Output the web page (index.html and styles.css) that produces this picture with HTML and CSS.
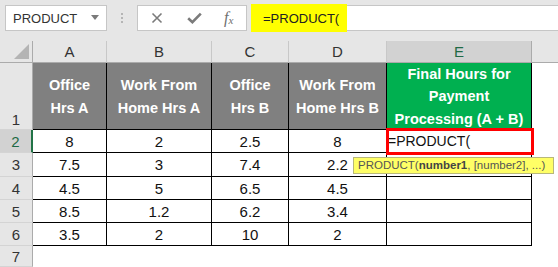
FILE: index.html
```html
<!DOCTYPE html>
<html>
<head>
<meta charset="utf-8">
<link rel="stylesheet" href="styles.css">
</head>
<body>
<div class="app">
  <div class="fbar">
    <div class="namebox">
      <span>PRODUCT</span>
      <svg class="caret" width="8" height="5" viewBox="0 0 8 5"><path d="M0 0H8L4 5Z" fill="#7a7a7a"/></svg>
    </div>
    <div class="dots"><i></i><i></i><i></i></div>
    <div class="btns">
      <svg class="bx" width="12" height="12" viewBox="0 0 12 12"><path d="M1.5 1.5L10.5 10.5M10.5 1.5L1.5 10.5" stroke="#7b7b7b" stroke-width="1.6" fill="none"/></svg>
      <svg class="bc" width="15" height="12" viewBox="0 0 15 12"><path d="M1.2 6.2L5.4 10.2L13.8 1.6" stroke="#7b7b7b" stroke-width="2.6" fill="none"/></svg>
      <span class="fx">f<sub>x</sub></span>
    </div>
    <div class="finput"><span class="hl">=PRODUCT(</span></div>
  </div>
  <div class="sheet">
    <div class="corner"><span class="tri"></span></div>
    <div class="ch">A</div>
    <div class="ch">B</div>
    <div class="ch">C</div>
    <div class="ch">D</div>
    <div class="ch sel">E</div>
    <div class="ch last"></div>

    <div class="rh r1">1</div>
    <div class="hd">Office<br>Hrs A</div>
    <div class="hd">Work From<br>Home Hrs A</div>
    <div class="hd">Office<br>Hrs B</div>
    <div class="hd">Work From<br>Home Hrs B</div>
    <div class="hd green">Final Hours for<br>Payment<br>Processing (A + B)</div>
    <div class="blank"></div>

    <div class="rh sel">2</div>
    <div class="c">8</div><div class="c">2</div><div class="c">2.5</div><div class="c">8</div><div class="c formula">=PRODUCT(</div><div class="blank"></div>

    <div class="rh">3</div>
    <div class="c">7.5</div><div class="c">3</div><div class="c">7.4</div><div class="c">2.2</div><div class="c"></div><div class="blank"></div>

    <div class="rh">4</div>
    <div class="c">4.5</div><div class="c">5</div><div class="c">6.5</div><div class="c">4.5</div><div class="c"></div><div class="blank"></div>

    <div class="rh">5</div>
    <div class="c">8.5</div><div class="c">1.2</div><div class="c">6.2</div><div class="c">3.4</div><div class="c"></div><div class="blank"></div>

    <div class="rh">6</div>
    <div class="c">3.5</div><div class="c">2</div><div class="c">10</div><div class="c">2</div><div class="c"></div><div class="blank"></div>

    <div class="rh">7</div>
    <div class="blank wide"></div>

    <div class="redbox"></div>
    <div class="tip">PRODUCT(<b>number1</b>, [number2], ...)</div>
  </div>
</div>
</body>
</html>
```
FILE: styles.css
```css
* { box-sizing: border-box; }
html, body { margin: 0; padding: 0; }
body {
  width: 558px;
  height: 267px;
  overflow: hidden;
  background: #ffffff;
  font-family: "Liberation Sans", Arial, sans-serif;
}
.app { width: 558px; height: 267px; display: flex; flex-direction: column; }

.fbar {
  height: 41px;
  background: #e6e6e6;
  display: flex;
  align-items: flex-start;
  padding-top: 5px;
}
.namebox {
  margin-left: 5px;
  width: 102px;
  height: 26px;
  background: #fff;
  border: 1px solid #c6c6c6;
  display: flex;
  align-items: center;
  justify-content: space-between;
  padding: 0 7px 0 7px;
  font-size: 13px;
  color: #333;
}
.caret { margin-top: -2px; }
.dots {
  width: 30px;
  height: 26px;
  display: flex;
  flex-direction: column;
  align-items: center;
  justify-content: center;
  gap: 2px;
}
.dots i { display: block; width: 2px; height: 2px; background: #b5b5b5; }
.btns {
  width: 110px;
  height: 26px;
  background: #fff;
  border: 1px solid #c6c6c6;
  display: flex;
  align-items: center;
  padding: 0 0 0 13px;
}
.bc { margin-left: 24px; }
.fx {
  margin-left: 22px;
  font-family: "Liberation Serif", "Times New Roman", serif;
  font-style: italic;
  font-size: 16px;
  color: #6f6f6f;
  line-height: 1;
}
.fx sub { font-size: 11px; vertical-align: -1px; }
.finput {
  margin-left: 4px;
  flex: 1;
  height: 26px;
  background: #fff;
  border-top: 1px solid #c6c6c6;
  border-bottom: 1px solid #c6c6c6;
  display: flex;
}
.hl {
  background: #ffff00;
  width: 96px;
  margin-top: -2px;
  height: 28px;
  display: flex;
  align-items: center;
  padding-left: 12px;
  font-size: 13px;
  color: #222;
}

.sheet {
  position: relative;
  flex: 1;
  display: grid;
  grid-template-columns: 33px 74px 105px 77px 98px 145px 1fr;
  grid-template-rows: 22px 67px 23px 24px 23px 23px 23px 1fr;
}
.corner {
  background: #e6e6e6;
  border-right: 1px solid #ababab;
  border-bottom: 1px solid #ababab;
  position: relative;
}
.tri {
  position: absolute;
  right: 3px;
  bottom: 3px;
  width: 0; height: 0;
  border-left: 15px solid transparent;
  border-bottom: 15px solid #b4b4b4;
}
.ch {
  background: #e6e6e6;
  border-right: 1px solid #c8c8c8;
  border-bottom: 1px solid #ababab;
  display: flex;
  align-items: center;
  justify-content: center;
  font-size: 15px;
  color: #333;
}
.ch.sel { background: #d2d2d2; color: #1f6a45; border-right-color: #ababab; }
.ch.last { border-right: none; }
.rh {
  background: #e6e6e6;
  border-right: 1px solid #ababab;
  border-bottom: 1px solid #d4d4d4;
  display: flex;
  align-items: center;
  justify-content: center;
  font-size: 15px;
  color: #333;
}
.rh.r1 { align-items: flex-end; padding-bottom: 1px; }
.rh.sel { background: #d2d2d2; color: #1f6a45; border-right: 2px solid #217346; }
.hd {
  background: #808080;
  color: #ffffff;
  font-weight: bold;
  font-size: 14.5px;
  line-height: 22.5px;
  text-align: center;
  border-right: 1px solid #000;
  border-bottom: 1px solid #000;
  display: flex;
  align-items: center;
  justify-content: center;
  padding-top: 1px;
}
.hd.green { background: #00b050; }
.c {
  border-right: 1px solid #000;
  border-bottom: 1px solid #000;
  display: flex;
  align-items: center;
  justify-content: center;
  font-size: 15px;
  color: #111;
}
.c.formula { justify-content: flex-start; padding-left: 1px; font-size: 14px; }
.blank { background: #fff; }
.blank.wide { grid-column: 2 / 8; }

.redbox {
  position: absolute;
  left: 386px;
  top: 87px;
  width: 148px;
  height: 27px;
  border: 3px solid #ff0000;
}
.tip {
  position: absolute;
  left: 353px;
  top: 116px;
  width: 201px;
  height: 17px;
  background: #ffff66;
  border: 1px solid #b8b87a;
  font-size: 11.5px;
  line-height: 15px;
  color: #555;
  padding-left: 4px;
  white-space: nowrap;
}
.tip b { color: #444; }
```
